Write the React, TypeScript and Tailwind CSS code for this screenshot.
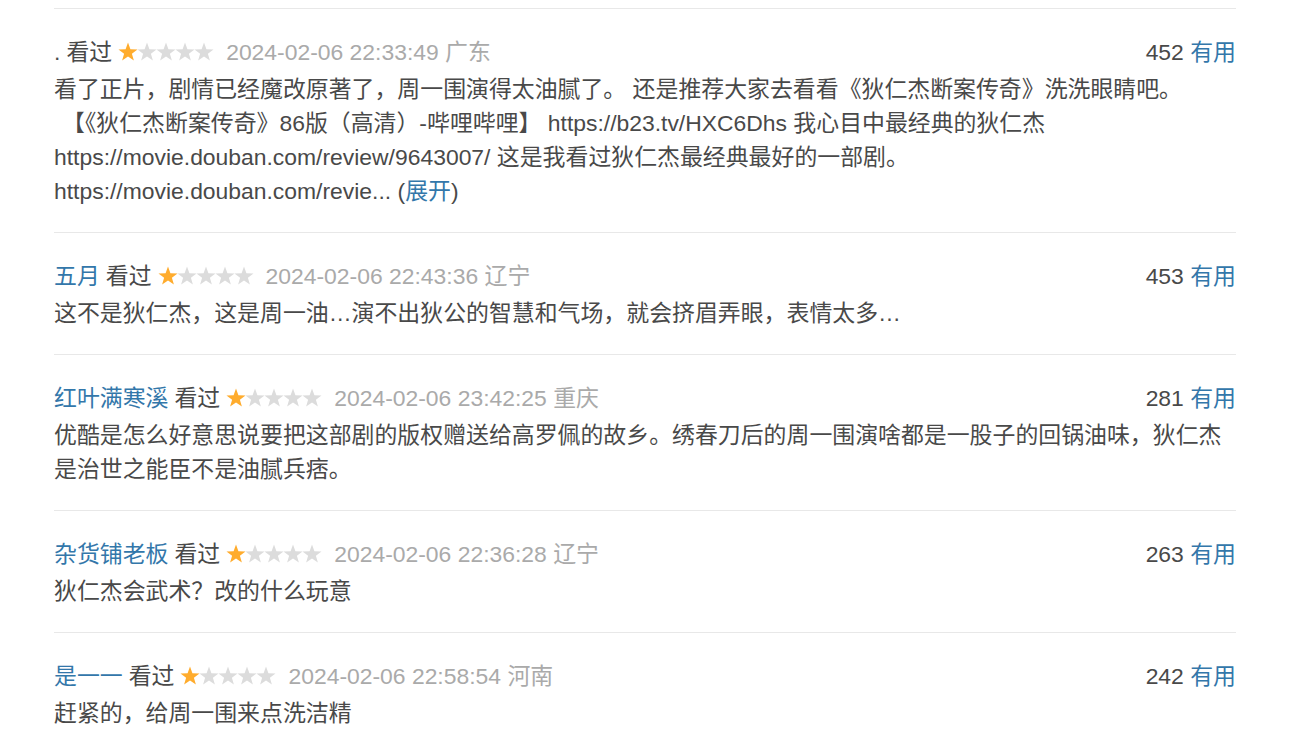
import React from "react";

const FONT = '"Liberation Sans", Arial, "Noto Sans CJK SC", sans-serif';

function Stars() {
  const star = (cx: number, fill: string) => {
    const pts: string[] = [];
    const R = 10;
    const r = 4.1;
    for (let i = 0; i < 10; i++) {
      const a = -Math.PI / 2 + (i * Math.PI) / 5;
      const rad = i % 2 === 0 ? R : r;
      pts.push(`${(cx + rad * Math.cos(a)).toFixed(2)},${(10.5 + rad * Math.sin(a)).toFixed(2)}`);
    }
    return <polygon key={cx} points={pts.join(" ")} fill={fill} />;
  };
  return (
    <svg width="96" height="20" viewBox="0 0 96 20" className="inline-block">
      {star(10, "#ffac2d")}
      {[29, 48, 67, 86].map((c) => star(c, "#dcdcdc"))}
    </svg>
  );
}

type Item = {
  user: string;
  userDark?: boolean;
  time: string;
  loc: string;
  votes: number;
  lines: React.ReactNode[];
};

const items: Item[] = [
  {
    user: ".",
    userDark: true,
    time: "2024-02-06 22:33:49",
    loc: "广东",
    votes: 452,
    lines: [
      "看了正片，剧情已经魔改原著了，周一围演得太油腻了。 还是推荐大家去看看《狄仁杰断案传奇》洗洗眼睛吧。",
      <span className="ml-[8px]">【《狄仁杰断案传奇》86版（高清）-哔哩哔哩】 https://b23.tv/HXC6Dhs 我心目中最经典的狄仁杰</span>,
      "https://movie.douban.com/review/9643007/ 这是我看过狄仁杰最经典最好的一部剧。",
      <>
        https://movie.douban.com/revie... (<span className="text-[#3377aa]">展开</span>)
      </>,
    ],
  },
  {
    user: "五月",
    time: "2024-02-06 22:43:36",
    loc: "辽宁",
    votes: 453,
    lines: ["这不是狄仁杰，这是周一油…演不出狄公的智慧和气场，就会挤眉弄眼，表情太多…"],
  },
  {
    user: "红叶满寒溪",
    time: "2024-02-06 23:42:25",
    loc: "重庆",
    votes: 281,
    lines: [
      "优酷是怎么好意思说要把这部剧的版权赠送给高罗佩的故乡。绣春刀后的周一围演啥都是一股子的回锅油味，狄仁杰",
      "是治世之能臣不是油腻兵痞。",
    ],
  },
  {
    user: "杂货铺老板",
    time: "2024-02-06 22:36:28",
    loc: "辽宁",
    votes: 263,
    lines: ["狄仁杰会武术？改的什么玩意"],
  },
  {
    user: "是一一",
    time: "2024-02-06 22:58:54",
    loc: "河南",
    votes: 242,
    lines: ["赶紧的，给周一围来点洗洁精"],
  },
];

export default function App() {
  return (
    <div
      className="w-[1298px] h-[754px] overflow-hidden bg-white pt-[8px]"
      style={{ fontFamily: FONT }}
    >
      <div className="ml-[54px] w-[1182px] text-[22.9px] leading-[34px] text-[#494949]">
        {items.map((it, i) => (
          <div key={i} className="border-t border-[#e8e8e8] pt-[26px] pb-[24px]">
            <div className="flex justify-between whitespace-nowrap">
              <div className="flex items-center">
                <span className={it.userDark ? "text-[#494949]" : "text-[#3377aa]"}>{it.user}</span>
                <span className="ml-[6px]">看过</span>
                <span className="ml-[6px] flex items-center">
                  <Stars />
                </span>
                <span className="ml-[12px] text-[#aaaaaa]">
                  {it.time} {it.loc}
                </span>
              </div>
              <div>
                <span>{it.votes}</span> <span className="text-[#3377aa]">有用</span>
              </div>
            </div>
            <div className="mt-[3px]">
              {it.lines.map((l, j) => (
                <div key={j} className="whitespace-nowrap">
                  {l}
                </div>
              ))}
            </div>
          </div>
        ))}
      </div>
    </div>
  );
}
